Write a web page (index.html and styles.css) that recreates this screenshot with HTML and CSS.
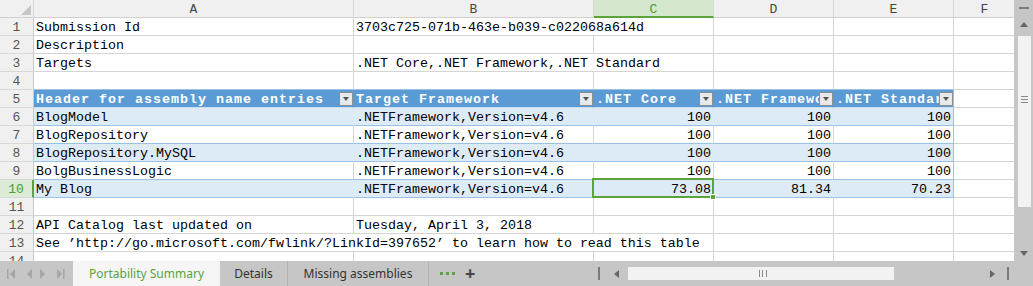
FILE: index.html
```html
<!DOCTYPE html>
<html lang="en">
<head>
    <meta charset="UTF-8">
    <title>Portability Summary</title>
    <link rel="stylesheet" href="styles.css">
</head>
<body>
    <div class="window">
        <div class="sheet-area">
            <div class="grid">
                <!-- column headers -->
                <div class="c hd corner"><span class="corner-tri"></span></div>
                <div class="c hd">A</div>
                <div class="c hd">B</div>
                <div class="c hd sel">C</div>
                <div class="c hd">D</div>
                <div class="c hd">E</div>
                <div class="c hd hd-f">F</div>

                <div class="c rn">1</div>
                <div class="c">Submission Id</div>
                <div class="c span2">3703c725-071b-463e-b039-c022068a614d</div>
                <div class="c"></div><div class="c"></div><div class="c"></div>

                <div class="c rn">2</div>
                <div class="c">Description</div>
                <div class="c"></div><div class="c"></div><div class="c"></div><div class="c"></div><div class="c"></div>

                <div class="c rn">3</div>
                <div class="c">Targets</div>
                <div class="c span2">.NET Core,.NET Framework,.NET Standard</div>
                <div class="c"></div><div class="c"></div><div class="c"></div>

                <div class="c rn">4</div>
                <div class="c top-blue"></div><div class="c top-blue"></div><div class="c top-blue"></div><div class="c top-blue"></div><div class="c top-blue"></div><div class="c"></div>

                <div class="c rn">5</div>
                <div class="c th"><span class="th-text">Header for assembly name entries</span><span class="filter"></span></div>
                <div class="c th"><span class="th-text">Target Framework</span><span class="filter"></span></div>
                <div class="c th"><span class="th-text">.NET Core</span><span class="filter"></span></div>
                <div class="c th"><span class="th-text">.NET Framework</span><span class="filter"></span></div>
                <div class="c th th-last"><span class="th-text">.NET Standard</span><span class="filter"></span></div>
                <div class="c"></div>

                <div class="c rn">6</div>
                <div class="c band">BlogModel</div>
                <div class="c band">.NETFramework,Version=v4.6</div>
                <div class="c band num">100</div>
                <div class="c band num">100</div>
                <div class="c band num last">100</div>
                <div class="c"></div>

                <div class="c rn">7</div>
                <div class="c plain">BlogRepository</div>
                <div class="c plain">.NETFramework,Version=v4.6</div>
                <div class="c plain num">100</div>
                <div class="c plain num">100</div>
                <div class="c plain num last">100</div>
                <div class="c"></div>

                <div class="c rn">8</div>
                <div class="c band">BlogRepository.MySQL</div>
                <div class="c band">.NETFramework,Version=v4.6</div>
                <div class="c band num">100</div>
                <div class="c band num">100</div>
                <div class="c band num last">100</div>
                <div class="c"></div>

                <div class="c rn">9</div>
                <div class="c plain">BolgBusinessLogic</div>
                <div class="c plain">.NETFramework,Version=v4.6</div>
                <div class="c plain num">100</div>
                <div class="c plain num">100</div>
                <div class="c plain num last">100</div>
                <div class="c"></div>

                <div class="c rn rn-sel">10</div>
                <div class="c band">My Blog</div>
                <div class="c band">.NETFramework,Version=v4.6</div>
                <div class="c band num active">73.08<span class="cursor"><span class="handle"></span></span></div>
                <div class="c band num">81.34</div>
                <div class="c band num last">70.23</div>
                <div class="c"></div>

                <div class="c rn">11</div>
                <div class="c"></div><div class="c"></div><div class="c"></div><div class="c"></div><div class="c"></div><div class="c"></div>

                <div class="c rn">12</div>
                <div class="c">API Catalog last updated on</div>
                <div class="c">Tuesday, April 3, 2018</div>
                <div class="c"></div><div class="c"></div><div class="c"></div><div class="c"></div>

                <div class="c rn">13</div>
                <div class="c span3">See ’http://go.microsoft.com/fwlink/?LinkId=397652’ to learn how to read this table</div>
                <div class="c"></div><div class="c"></div><div class="c"></div>

                <div class="c rn">14</div>
                <div class="c"></div><div class="c"></div><div class="c"></div><div class="c"></div><div class="c"></div><div class="c"></div>
            </div>

            <div class="vscroll">
                <span class="vs-dash"></span>
                <span class="tri tri-up"></span>
                <div class="vs-thumb"><span class="grip-h"></span></div>
                <div class="vs-fill"></div>
                <span class="tri tri-down"></span>
            </div>
        </div>

        <div class="tabbar">
            <div class="tab-nav">
                <svg width="73" height="25" viewBox="0 0 73 25">
                    <g fill="#a6a6a6">
                        <rect x="7" y="8" width="1.5" height="10"/>
                        <path d="M15 8 L10 13 L15 18 Z"/>
                        <path d="M32 8 L27 13 L32 18 Z"/>
                        <path d="M40 8 L45 13 L40 18 Z"/>
                        <path d="M57 8 L62 13 L57 18 Z"/>
                        <rect x="63" y="8" width="1.5" height="10"/>
                    </g>
                </svg>
            </div>
            <div class="tab tab-active">Portability Summary</div>
            <div class="tab tab-details">Details</div>
            <div class="tab tab-missing">Missing assemblies</div>
            <div class="tab-more">
                <span class="dot"></span><span class="dot"></span><span class="dot"></span>
            </div>
            <div class="tab-add">+</div>
            <div class="hscroll">
                <span class="hs-bar"></span>
                <span class="tri tri-left"></span>
                <div class="hs-thumb"><span class="grip-v"></span></div>
                <span class="tri tri-right"></span>
                <span class="hs-bar hs-bar-end"></span>
            </div>
        </div>
    </div>
</body>
</html>
```

FILE: styles.css
```css
* {
    margin: 0;
    padding: 0;
    box-sizing: border-box;
}

body {
    font-family: "Liberation Mono", monospace;
    background-color: #fff;
    width: 1033px;
    height: 286px;
    overflow: hidden;
}

.window {
    display: flex;
    flex-direction: column;
    height: 286px;
}

.sheet-area {
    display: flex;
    height: 261px;
    overflow: hidden;
}

/* cell grid */
.grid {
    width: 1014px;
    overflow: hidden;
    display: grid;
    grid-template-columns: 34px 320px 240px 120px 120px 120px 72px;
    grid-auto-rows: 18px;
}

.c {
    border-right: 1px solid #d4d4d4;
    border-bottom: 1px solid #d4d4d4;
    padding: 1px 2px 0;
    white-space: nowrap;
    overflow: hidden;
    font-size: 13.33px;
    line-height: 17px;
    color: #000;
}

.span2 {
    grid-column: span 2;
}

.span3 {
    grid-column: span 3;
}

.hd {
    background-color: #f0f0f0;
    border-right-color: #d8d8d8;
    border-bottom-color: #d0d0d0;
    text-align: center;
    color: #444;
    font-size: 13px;
}

.hd-f {
    padding-right: 12px;
}

.hd.sel {
    background-color: #d5e7cf;
    color: #4e9a2c;
    border-bottom: 2px solid #5ba33b;
}

.corner {
    position: relative;
}

.corner-tri {
    position: absolute;
    right: 2px;
    bottom: 2px;
    width: 0;
    height: 0;
    border-left: 10px solid transparent;
    border-bottom: 10px solid #c6c6c6;
}

.rn {
    background-color: #f0f0f0;
    border-bottom-color: #d8d8d8;
    border-right-color: #c8c8c8;
    text-align: center;
    color: #555;
    font-size: 13px;
}

.rn-sel {
    background-color: #dcebd5;
    color: #4e9a2c;
    border-right: 2px solid #5ba33b;
}

/* table styling */
.top-blue {
    border-bottom-color: #9bc2e6;
}

.th {
    background-color: #5b9bd5;
    border-right-color: #5b9bd5;
    border-bottom-color: #c9ddf0;
    color: #fff;
    font-weight: bold;
    letter-spacing: 1px;
    display: flex;
    align-items: center;
    padding: 1px 0 0 2px;
}

.th-last {
    border-right-color: #9bc2e6;
}

.th-text {
    flex: 1;
    overflow: hidden;
}

.filter {
    flex: none;
    width: 14px;
    height: 14px;
    background-color: #e8e8e8;
    border: 1px solid #8e8e8e;
    position: relative;
}

.filter:after {
    content: "";
    position: absolute;
    left: 3px;
    top: 4px;
    border-left: 3px solid transparent;
    border-right: 3px solid transparent;
    border-top: 4px solid #555;
}

.band {
    background-color: #ddebf7;
    border-right-color: #ddebf7;
    border-bottom-color: #9bc2e6;
}

.plain {
    border-bottom-color: #9bc2e6;
}

.last {
    border-right-color: #9bc2e6;
}

.num {
    text-align: right;
}

.active {
    position: relative;
    overflow: visible;
}

.cursor {
    position: absolute;
    left: -2px;
    top: -2px;
    right: -1px;
    bottom: -1px;
    border: 2px solid #5ba33b;
    z-index: 2;
}

.handle {
    position: absolute;
    right: -4px;
    bottom: -4px;
    width: 6px;
    height: 6px;
    background-color: #5ba33b;
    border: 1px solid #fff;
}

/* vertical scrollbar */
.vscroll {
    width: 19px;
    background-color: #c6c6c6;
    display: flex;
    flex-direction: column;
    align-items: center;
}

.vs-dash {
    width: 10px;
    height: 2px;
    background-color: #7a7a7a;
    margin-top: 7px;
}

.tri {
    width: 0;
    height: 0;
    flex: none;
}

.tri-up {
    margin-top: 13px;
    border-left: 4px solid transparent;
    border-right: 4px solid transparent;
    border-bottom: 5px solid #666;
}

.tri-down {
    margin-bottom: 5px;
    border-left: 4px solid transparent;
    border-right: 4px solid transparent;
    border-top: 5px solid #666;
}

.vs-thumb {
    width: 13px;
    height: 171px;
    margin-top: 9px;
    margin-left: 2px;
    background-color: #f2f2f2;
    display: flex;
    align-items: center;
    justify-content: center;
    padding-bottom: 44px;
}

.grip-h {
    width: 7px;
    height: 7px;
    border-top: 1px solid #888;
    border-bottom: 1px solid #888;
    position: relative;
}

.grip-h:after {
    content: "";
    position: absolute;
    left: 0;
    right: 0;
    top: 2px;
    border-top: 1px solid #888;
}

.vs-fill {
    flex: 1;
}

/* sheet tabs */
.tabbar {
    height: 25px;
    background-color: #c6c6c6;
    display: flex;
    align-items: stretch;
    font-family: "Noto Sans", sans-serif;
    font-size: 12px;
    color: #333;
}

.tab-nav {
    width: 73px;
    flex: none;
}

.tab {
    display: flex;
    align-items: center;
    justify-content: center;
    border-right: 1px solid #b4b4b4;
}

.tab-active {
    width: 147px;
    background-color: #f5f5f5;
    color: #5ba33b;
    border-right: none;
}

.tab-details {
    width: 68px;
}

.tab-missing {
    width: 141px;
}

.tab-more {
    display: flex;
    align-items: center;
    gap: 3px;
    margin-left: 11px;
}

.dot {
    width: 3px;
    height: 3px;
    background-color: #5ba33b;
}

.tab-add {
    margin-left: 10px;
    font-size: 18px;
    font-weight: bold;
    color: #444;
    line-height: 24px;
}

.hscroll {
    flex: 1;
    display: flex;
    align-items: center;
    padding-left: 123px;
}

.hs-bar {
    width: 2px;
    height: 13px;
    background-color: #7a7a7a;
}

.hs-bar-end {
    margin-left: 12px;
}

.tri-left {
    margin-left: 14px;
    border-top: 4px solid transparent;
    border-bottom: 4px solid transparent;
    border-right: 5px solid #666;
}

.tri-right {
    margin-left: 96px;
    border-top: 4px solid transparent;
    border-bottom: 4px solid transparent;
    border-left: 5px solid #666;
}

.hs-thumb {
    width: 266px;
    height: 13px;
    margin-left: 9px;
    background-color: #f2f2f2;
    display: flex;
    align-items: center;
    justify-content: center;
    padding-left: 3px;
}

.grip-v {
    width: 8px;
    height: 7px;
    border-left: 1px solid #888;
    border-right: 1px solid #888;
    position: relative;
}

.grip-v:after {
    content: "";
    position: absolute;
    top: 0;
    bottom: 0;
    left: 2px;
    border-left: 1px solid #888;
}
```
